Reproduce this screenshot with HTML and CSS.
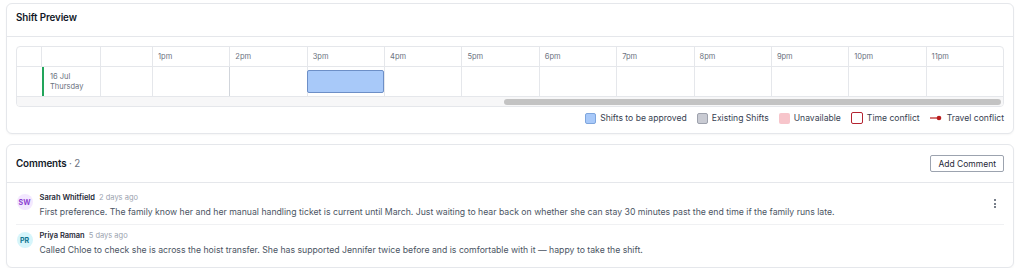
FILE: index.html
```html
<!DOCTYPE html>
<html>
<head>
<meta charset="utf-8">
<link rel="stylesheet" href="styles.css">
</head>
<body>
<div class="page">
  <section class="card">
    <div class="card-head shift-head"><h2 class="title">Shift Preview</h2></div>
    <div class="card-body">
      <div class="grid">
        <div class="row head">
          <div class="c c-pad"></div>
          <div class="c c-date"></div>
          <div class="c c-part"></div>
          <div class="c c-hr">1pm</div>
          <div class="c c-hr">2pm</div>
          <div class="c c-hr">3pm</div>
          <div class="c c-hr">4pm</div>
          <div class="c c-hr">5pm</div>
          <div class="c c-hr">6pm</div>
          <div class="c c-hr">7pm</div>
          <div class="c c-hr">8pm</div>
          <div class="c c-hr">9pm</div>
          <div class="c c-hr">10pm</div>
          <div class="c c-hr last">11pm</div>
        </div>
        <div class="row body">
          <div class="c c-pad"></div>
          <div class="c c-date date"><span>16 Jul</span><span>Thursday</span></div>
          <div class="c c-part"></div>
          <div class="c c-hr"></div>
          <div class="c c-hr dark"></div>
          <div class="c c-hr"><div class="shift"></div></div>
          <div class="c c-hr"></div>
          <div class="c c-hr"></div>
          <div class="c c-hr"></div>
          <div class="c c-hr"></div>
          <div class="c c-hr"></div>
          <div class="c c-hr"></div>
          <div class="c c-hr"></div>
          <div class="c c-hr last"></div>
        </div>
        <div class="scroll"><div class="thumb"></div></div>
      </div>
      <div class="legend">
        <span class="item"><i class="sw sw-blue"></i>Shifts to be approved</span>
        <span class="item"><i class="sw sw-gray"></i>Existing Shifts</span>
        <span class="item"><i class="sw sw-pink"></i>Unavailable</span>
        <span class="item"><i class="sw sw-red"></i>Time conflict</span>
        <span class="item"><svg class="travel" width="13" height="6" viewBox="0 0 13 6"><line x1="0" y1="3" x2="9" y2="3" stroke="#b91c1c" stroke-width="1.2"/><circle cx="9" cy="3" r="2.3" fill="#b91c1c"/></svg>Travel conflict</span>
      </div>
    </div>
  </section>

  <section class="card">
    <div class="card-head comments-head">
      <h2 class="title">Comments <span class="count">· 2</span></h2>
      <button class="btn">Add Comment</button>
    </div>
    <div class="comments">
      <div class="comment">
        <div class="avatar av-sw">SW</div>
        <div class="c-main">
          <div class="meta"><span class="name">Sarah Whitfield</span><span class="when">2 days ago</span></div>
          <p class="text">First preference. The family know her and her manual handling ticket is current until March. Just waiting to hear back on whether she can stay 30 minutes past the end time if the family runs late.</p>
        </div>
        <div class="kebab"><i></i><i></i><i></i></div>
      </div>
      <div class="comment">
        <div class="avatar av-pr">PR</div>
        <div class="c-main">
          <div class="meta"><span class="name">Priya Raman</span><span class="when">5 days ago</span></div>
          <p class="text">Called Chloe to check she is across the hoist transfer. She has supported Jennifer twice before and is comfortable with it — happy to take the shift.</p>
        </div>
      </div>
    </div>
  </section>
</div>
</body>
</html>
```

FILE: styles.css
```css
* { box-sizing: border-box; }
html, body { margin: 0; padding: 0; background: #ffffff; }
body {
  font-family: Inter, "Liberation Sans", sans-serif;
  color: #111827;
}
.page {
  padding: 3px 10px 0 6px;
  display: flex;
  flex-direction: column;
  gap: 10px;
}
.card {
  border: 1px solid #e5e7eb;
  border-radius: 6px;
  background: #fff;
  box-shadow: 0 1px 2px rgba(0,0,0,0.04);
}
.card-head {
  height: 33px;
  border-bottom: 1px solid #e5e7eb;
  display: flex;
  align-items: center;
  justify-content: space-between;
  padding: 0 9px;
}
.shift-head {
  align-items: flex-start;
  padding-top: 8px;
}
.title {
  margin: 0;
  font-size: 9.8px;
  line-height: 12px;
  font-weight: 600;
  color: #111827;
  letter-spacing: -0.1px;
}
.card-body { padding: 9px 9px 4px 9px; }

.grid {
  border: 1px solid #e5e7eb;
  border-radius: 4px;
  overflow: hidden;
}
.row { display: flex; }
.row.head { height: 20px; border-bottom: 1px solid #e5e7eb; }
.row.body { height: 30px; border-bottom: 1px solid #e5e7eb; }
.c {
  border-right: 1px solid #e5e7eb;
  font-size: 7.5px;
  color: #6b7280;
  position: relative;
}
.c.last { border-right: none; }
.c-pad { width: 25px; flex: none; }
.c-date { width: 59px; flex: none; }
.c-part { width: 52px; flex: none; }
.c-hr { flex: 1; padding-left: 5px; display: flex; align-items: center; }
.row.body .c-hr { padding: 0; }
.row.body .c-hr:nth-child(4) { border-right-color: #d1d5db; }
.date {
  border-left: 2px solid #22a55b;
  padding-left: 6px;
  display: flex;
  flex-direction: column;
  justify-content: center;
  line-height: 10px;
  color: #6b7280;
}
.row.body .c-pad { border-right: none; }
.shift {
  position: absolute;
  left: -1px; right: 0; top: 3px; bottom: 3px;
  background: #a8c9f9;
  border: 1px solid #6d8fc7;
  border-radius: 2px;
}
.scroll {
  height: 9px;
  background: #f7f7f8;
  position: relative;
}
.thumb {
  position: absolute;
  left: 487px;
  right: 2px;
  top: 2px;
  height: 6px;
  border-radius: 3px;
  background: #c3c3c3;
}
.legend {
  display: flex;
  justify-content: flex-end;
  align-items: center;
  gap: 10px;
  height: 22px;
  font-size: 8.6px;
  color: #374151;
}
.item { display: flex; align-items: center; gap: 4px; }
.sw { display: inline-block; width: 11px; height: 11px; border-radius: 2px; }
.sw-blue { background: #a8c9f9; border: 1px solid #7fa6dd; }
.sw-gray { background: #c9cbd3; border: 1px solid #9ea2ad; }
.sw-pink { background: #f7c5cb; }
.sw-red { width: 12px; height: 12px; border: 1.5px solid #b42330; background: #fff; }
.travel { display: block; }

.comments-head { height: 38px; }
.count { font-weight: 400; color: #6b7280; }
.btn {
  font-family: Inter, "Liberation Sans", sans-serif;
  font-size: 8.5px;
  color: #1f2937;
  background: #fff;
  border: 1px solid #9ca3af;
  border-radius: 2px;
  height: 17px;
  padding: 0 7px;
  margin-right: 0;
}
.comments { padding: 0 9px 5px 9px; }
.comment {
  display: flex;
  align-items: flex-start;
  gap: 7px;
  padding: 9px 0 6px 0;
}
.comment + .comment { border-top: 1px solid #f0f1f3; padding-top: 5px; }
.avatar {
  width: 16px; height: 16px;
  margin-left: 0.5px;
  border-radius: 50%;
  display: flex; align-items: center; justify-content: center;
  font-size: 7px; font-weight: 700;
  margin-top: 2px;
  flex: none;
}
.av-sw { background: #f3e8ff; color: #8b3fd1; }
.av-pr { background: #d6f5fb; color: #0f7490; }
.c-main { flex: 1; }
.meta { display: flex; gap: 4px; align-items: baseline; line-height: 12px; }
.name { font-size: 7.5px; font-weight: 600; color: #1f2937; }
.when { font-size: 7.5px; color: #9ca3af; }
.text { margin: 2px 0 0 0; font-size: 8.7px; color: #4b5563; line-height: 12px; }
.kebab {
  width: 12px;
  display: flex; flex-direction: column; align-items: center; gap: 1.5px;
  margin-top: 7px;
  margin-right: 3px;
}
.kebab i { width: 2px; height: 2px; border-radius: 50%; background: #4b5563; display: block; }
```
